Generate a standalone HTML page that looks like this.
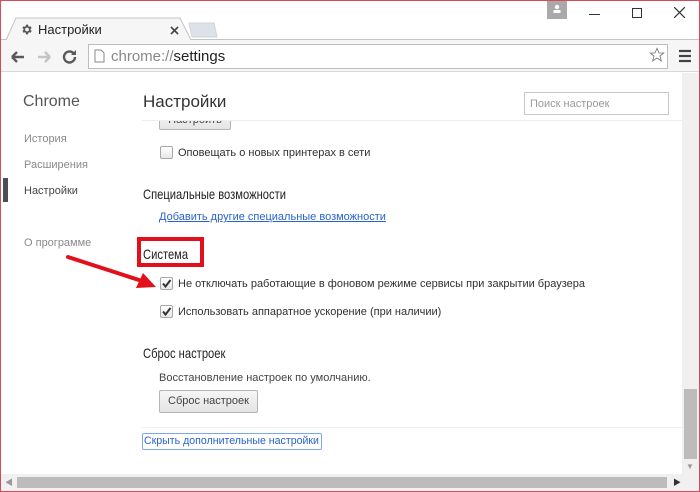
<!DOCTYPE html>
<html><head><meta charset="utf-8"><style>
*{margin:0;padding:0;box-sizing:border-box}
body{width:700px;height:492px;overflow:hidden;background:#fff;font-family:"Liberation Sans","Noto Sans CJK SC",sans-serif;position:relative;color:#303030}
.a{position:absolute;white-space:nowrap}
.frame{position:absolute;left:0;top:0;width:700px;height:492px;border:1px solid #d64b5a;pointer-events:none;z-index:9}
.cb{position:absolute;width:13px;height:13px;border:1px solid #a8a8a8;border-radius:2px;background:linear-gradient(#fff,#e8e8e8)}
.btn{position:absolute;border:1px solid #b5b5b5;border-radius:2px;background:linear-gradient(#f6f6f6,#e4e4e4);font-size:11px;color:#444;text-align:center}
.h{font-size:14px;color:#222;transform:scaleX(0.8);transform-origin:0 0}
.t{font-size:11px}
</style></head><body>
<div class="frame"></div>
<div class="a" style="left:0;top:0;width:700px;height:40px;background:#fff"></div>
<div class="a" style="left:0;top:39px;width:700px;height:1px;background:#c4c4c4"></div>
<svg class="a" style="left:0;top:17px" width="230" height="24"><path d="M6 23 L16 1 L180 1 L191 23" fill="#f6f6f6" stroke="#c4c4c4"/><path d="M189 6 L214 6 L217 20 L192 20 Z" fill="#dde2e8" stroke="#cfd4da"/></svg>
<svg class="a" style="left:20px;top:23px" width="13" height="13" viewBox="0 0 24 24"><path fill="#555" d="M19.4 13a7.5 7.5 0 000-2l2.1-1.6-2-3.5-2.5 1a7.6 7.6 0 00-1.7-1L15 3h-4l-.4 2.9a7.6 7.6 0 00-1.7 1l-2.5-1-2 3.5L6.6 11a7.5 7.5 0 000 2l-2.1 1.6 2 3.5 2.5-1a7.6 7.6 0 001.7 1L11 21h4l.4-2.9a7.6 7.6 0 001.7-1l2.5 1 2-3.5zM13 15.5a3.5 3.5 0 110-7 3.5 3.5 0 010 7z"/></svg>
<div class="a" style="left:38px;top:22px;font-size:13px;color:#222">Настройки</div>
<svg class="a" style="left:170px;top:26px" width="9" height="9"><path d="M1 1l7 7M8 1l-7 7" stroke="#444" stroke-width="1.6"/></svg>
<div class="a" style="left:547px;top:0;width:20px;height:19px;background:#a9a9a9"></div>
<svg class="a" style="left:551px;top:3px" width="12" height="12"><circle cx="6" cy="4" r="2.2" fill="#fff"/><rect x="2.5" y="7" width="7" height="3" fill="#fff"/></svg>
<div class="a" style="left:589px;top:14px;width:11px;height:1px;background:#333"></div>
<div class="a" style="left:632px;top:8px;width:10px;height:10px;border:1px solid #333"></div>
<svg class="a" style="left:674px;top:7px" width="11" height="11"><path d="M0 0l11 11M11 0L0 11" stroke="#333" stroke-width="1.2"/></svg>
<div class="a" style="left:1px;top:40px;width:698px;height:32px;background:#f6f6f6;border-bottom:1px solid #d8d8d8"></div>
<svg class="a" style="left:10px;top:49px" width="70" height="16"><path d="M2 8h12M2 8l5-5M2 8l5 5" stroke="#5a5a5a" stroke-width="2.4" fill="none"/><path d="M28 8h12M40 8l-5-5M40 8l-5 5" stroke="#c4c4c4" stroke-width="2.4" fill="none"/><path d="M65 8a5.5 5.5 0 11-1.6-3.9" stroke="#5a5a5a" stroke-width="2.4" fill="none"/><path d="M66 1v5h-5z" fill="#5a5a5a"/></svg>
<div class="a" style="left:88px;top:44px;width:580px;height:25px;background:#fff;border:1px solid #bdbdbd"></div>
<svg class="a" style="left:94px;top:49px" width="11" height="14"><path d="M1 1h6l3 3v9H1z" fill="#fff" stroke="#888"/></svg>
<div class="a" style="left:111px;top:48px;font-size:15px;color:#888">chrome://<span style="color:#222">settings</span></div>
<svg class="a" style="left:649px;top:47px" width="16" height="16" viewBox="0 0 24 24"><path d="M12 2l3 7h7l-5.5 4.5 2 7.5-6.5-4.5-6.5 4.5 2-7.5L2 9h7z" fill="none" stroke="#777" stroke-width="1.3"/></svg>
<svg class="a" style="left:679px;top:49px" width="12" height="14"><path d="M0 2h12M0 7h12M0 12h12" stroke="#444" stroke-width="2.2"/></svg>
<div class="a" style="left:23px;top:93px;font-size:16px;color:#555">Chrome</div>
<div class="a t" style="left:24px;top:133px;color:#8a8a8a">История</div>
<div class="a t" style="left:24px;top:159px;color:#8a8a8a">Расширения</div>
<div class="a t" style="left:24px;top:185px;color:#444">Настройки</div>
<div class="a" style="left:3px;top:178px;width:5px;height:24px;background:#4b4e57"></div>
<div class="a t" style="left:24px;top:237px;color:#8a8a8a">О программе</div>
<div class="btn" style="left:159px;top:112px;width:72px;height:18px;line-height:15px">Настроить</div>
<div class="a" style="left:142px;top:80px;width:540px;height:41px;background:#fff;border-bottom:1px solid #eee"></div>
<div class="a" style="left:143px;top:92px;font-size:17px;color:#333">Настройки</div>
<div class="a" style="left:524px;top:92px;width:145px;height:23px;border:1px solid #c8c8c8;font-size:11px;color:#999;padding:5px 0 0 5px">Поиск настроек</div>
<div class="cb" style="left:160px;top:146px"></div>
<div class="a t" style="left:178px;top:147px">Оповещать о новых принтерах в сети</div>
<div class="a h" style="left:143px;top:186px">Специальные возможности</div>
<div class="a t" style="left:159px;top:211px;color:#2962c8;text-decoration:underline">Добавить другие специальные возможности</div>
<div class="a" style="left:137px;top:237px;width:67px;height:30px;border:4px solid #e2101b"></div>
<div class="a h" style="left:143px;top:246px">Система</div>
<div class="cb" style="left:160px;top:277px"></div><svg class="a" style="left:161px;top:278px" width="11" height="11"><path d="M2 5.5l2.5 3L9.5 2" stroke="#333" stroke-width="2" fill="none"/></svg>
<div class="a t" style="left:178px;top:278px">Не отключать работающие в фоновом режиме сервисы при закрытии браузера</div>
<div class="cb" style="left:160px;top:305px"></div><svg class="a" style="left:161px;top:306px" width="11" height="11"><path d="M2 5.5l2.5 3L9.5 2" stroke="#333" stroke-width="2" fill="none"/></svg>
<div class="a t" style="left:178px;top:306px">Использовать аппаратное ускорение (при наличии)</div>
<svg class="a" style="left:60px;top:248px" width="100" height="45"><path d="M8 9 L82 33" stroke="#e2101b" stroke-width="4" stroke-linecap="round"/><path d="M96 39 L76 40 L83 25 Z" fill="#e2101b"/></svg>
<div class="a h" style="left:143px;top:345px">Сброс настроек</div>
<div class="a t" style="left:159px;top:372px;color:#444">Восстановление настроек по умолчанию.</div>
<div class="btn" style="left:159px;top:390px;width:99px;height:23px;line-height:21px">Сброс настроек</div>
<div class="a" style="left:142px;top:427px;width:540px;height:1px;background:#eee"></div>
<div class="a" style="left:142px;top:433px;width:180px;height:17px;border:1px solid #7aa7f0;border-radius:2px;color:#2962c8;padding-left:1px;line-height:15px;font-size:10.6px">Скрыть дополнительные настройки</div>
<div class="a" style="left:682px;top:73px;width:17px;height:402px;background:#f0f0f0"></div>
<div class="a" style="left:684px;top:389px;width:13px;height:70px;background:#bcbcbc"></div>
<div class="a" style="left:1px;top:474px;width:698px;height:17px;background:#f0f0f0"></div>
<div class="a" style="left:17px;top:477px;width:650px;height:11px;background:#bcbcbc"></div>
<div class="a" style="left:5px;top:477px;font-size:8px;color:#999">◀</div>
<div class="a" style="left:673px;top:477px;font-size:8px;color:#333">▶</div>
<div class="a" style="left:686px;top:462px;font-size:8px;color:#999">▼</div>
</body></html>
